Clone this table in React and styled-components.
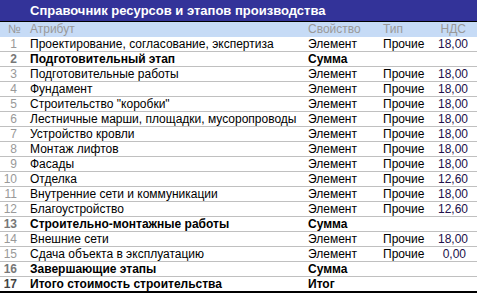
import React from "react";
import styled, { createGlobalStyle } from "styled-components";

const Global = createGlobalStyle`
  html, body { margin: 0; padding: 0; background: #fff; }
  body { font-family: "Liberation Sans", Arial, sans-serif; }
`;

const Panel = styled.div`
  width: 477px;
  background: #fff;
`;

const TitleBar = styled.div`
  height: 21px;
  background: #333399;
  color: #fff;
  font-weight: bold;
  font-size: 13px;
  line-height: 21px;
  padding-left: 30px;
  border-bottom: 1px solid #000;
`;

const Table = styled.table`
  width: 100%;
  border-collapse: collapse;
  table-layout: fixed;
  font-size: 12px;
`;

const HeadRow = styled.tr`
  background: #c6dbf6;
  height: 15px;
`;

const Th = styled.th`
  font-weight: normal;
  color: #999;
  padding: 0 0 0 ${(p) => (p.$pl != null ? p.$pl : 5)}px;
  padding-right: ${(p) => p.$pr || 0}px;
  text-align: ${(p) => p.$align || "left"};
  height: 15px;
  line-height: 15px;
  white-space: nowrap;
`;

const Row = styled.tr`
  height: 14px;
  border-bottom: ${(p) => (p.$last ? "2px solid #000" : "1px solid #c0c0c0")};
`;

const Td = styled.td`
  padding: 0 ${(p) => p.$pr || 0}px 0 ${(p) => (p.$pl != null ? p.$pl : 5)}px;
  text-align: ${(p) => p.$align || "left"};
  font-weight: ${(p) => (p.$bold ? "bold" : "normal")};
  color: ${(p) => p.$color || "#000"};
  line-height: 14px;
  height: 14px;
  white-space: nowrap;
  overflow: hidden;
`;

const rows = [
  [1, "Проектирование, согласование, экспертиза", "Элемент", "Прочие", "18,00"],
  [2, "Подготовительный этап", "Сумма", "", "", true],
  [3, "Подготовительные работы", "Элемент", "Прочие", "18,00"],
  [4, "Фундамент", "Элемент", "Прочие", "18,00"],
  [5, "Строительство \"коробки\"", "Элемент", "Прочие", "18,00"],
  [6, "Лестничные марши, площадки, мусоропроводы", "Элемент", "Прочие", "18,00"],
  [7, "Устройство кровли", "Элемент", "Прочие", "18,00"],
  [8, "Монтаж лифтов", "Элемент", "Прочие", "18,00"],
  [9, "Фасады", "Элемент", "Прочие", "18,00"],
  [10, "Отделка", "Элемент", "Прочие", "12,60"],
  [11, "Внутренние сети и коммуникации", "Элемент", "Прочие", "18,00"],
  [12, "Благоустройство", "Элемент", "Прочие", "12,60"],
  [13, "Строительно-монтажные работы", "Сумма", "", "", true],
  [14, "Внешние сети", "Элемент", "Прочие", "18,00"],
  [15, "Сдача объекта в эксплуатацию", "Элемент", "Прочие", "0,00"],
  [16, "Завершающие этапы", "Сумма", "", "", true],
  [17, "Итого стоимость строительства", "Итог", "", "", true],
];

export default function App() {
  return (
    <>
      <Global />
      <Panel>
        <TitleBar>Справочник ресурсов и этапов производства</TitleBar>
        <Table>
          <colgroup>
            <col style={{ width: 25 }} />
            <col style={{ width: 278 }} />
            <col style={{ width: 75 }} />
            <col style={{ width: 55 }} />
            <col />
          </colgroup>
          <thead>
            <HeadRow>
              <Th $pl={8}>№</Th>
              <Th>Атрибут</Th>
              <Th>Свойство</Th>
              <Th>Тип</Th>
              <Th $align="right" $pr={11}>НДС</Th>
            </HeadRow>
          </thead>
          <tbody>
            {rows.map(([n, a, p, t, v, bold], i) => (
              <Row key={n} $last={i === rows.length - 1}>
                <Td $pl={0} $pr={8} $align="right" $bold={bold} $color={n === 17 ? "#444" : bold ? "#777" : "#999"}>{n}</Td>
                <Td $bold={bold}>{a}</Td>
                <Td $bold={bold}>{p}</Td>
                <Td>{t}</Td>
                <Td $align="right" $pr={11} $color="#22104a">{v}</Td>
              </Row>
            ))}
          </tbody>
        </Table>
      </Panel>
    </>
  );
}
